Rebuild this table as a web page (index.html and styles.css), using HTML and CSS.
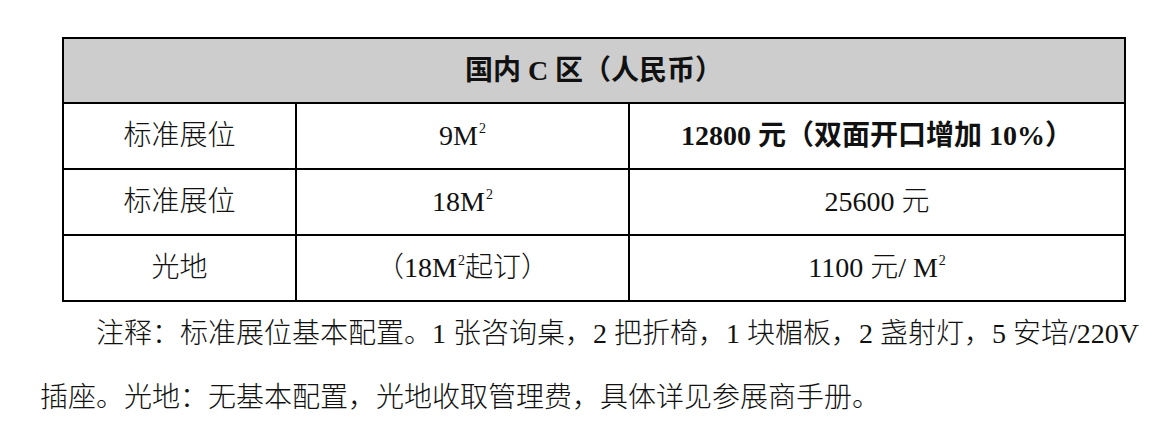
FILE: index.html
```html
<!DOCTYPE html>
<html lang="zh-CN">
<head>
<meta charset="utf-8">
<title>国内C区</title>
<link rel="stylesheet" href="styles.css">
</head>
<body>
<div class="page">
  <table class="price">
    <colgroup>
      <col class="c1">
      <col class="c2">
      <col class="c3">
    </colgroup>
    <thead>
      <tr><th colspan="3">国内 C 区（人民币）</th></tr>
    </thead>
    <tbody>
      <tr>
        <td>标准展位</td>
        <td>9M<sup>2</sup></td>
        <td class="strong">12800 元（双面开口增加 10%）</td>
      </tr>
      <tr>
        <td>标准展位</td>
        <td>18M<sup>2</sup></td>
        <td>25600 元</td>
      </tr>
      <tr>
        <td>光地</td>
        <td>（18M<sup>2</sup>起订）</td>
        <td>1100 元/ M<sup>2</sup></td>
      </tr>
    </tbody>
  </table>
  <p class="note">注释：标准展位基本配置。1 张咨询桌，2 把折椅，1 块楣板，2 盏射灯，5 安培/220V插座。光地：无基本配置，光地收取管理费，具体详见参展商手册。</p>
</div>
</body>
</html>
```
FILE: styles.css
```css
html, body {
  margin: 0;
  padding: 0;
  background: #ffffff;
}

body {
  font-family: "Liberation Serif", "Noto Sans CJK SC", serif;
  color: #111111;
  font-size: 28px;
  font-weight: 300;
}

.page {
  padding: 37px 0 0 40px;
  width: 1119px;
}

.price {
  margin-left: 22px;
  width: 1062px;
  table-layout: fixed;
  border-collapse: collapse;
  border: 2px solid #000;
}

.price .c1 { width: 233px; }
.price .c2 { width: 333px; }
.price .c3 { width: 496px; }

.price th,
.price td {
  border: 2px solid #000;
  text-align: center;
  vertical-align: middle;
  padding: 0;
  line-height: 32px;
}

.price th {
  height: 63px;
  background: #cdcdcd;
  font-weight: 700;
}

.price td {
  height: 64px;
}

.price td.strong {
  font-weight: 700;
}

.price sup {
  font-size: 14px;
  line-height: 0;
  vertical-align: 0;
  position: relative;
  top: -12px;
  margin-left: 1px;
}

.note {
  margin: 0;
  line-height: 64px;
  text-indent: 56px;
}
```
